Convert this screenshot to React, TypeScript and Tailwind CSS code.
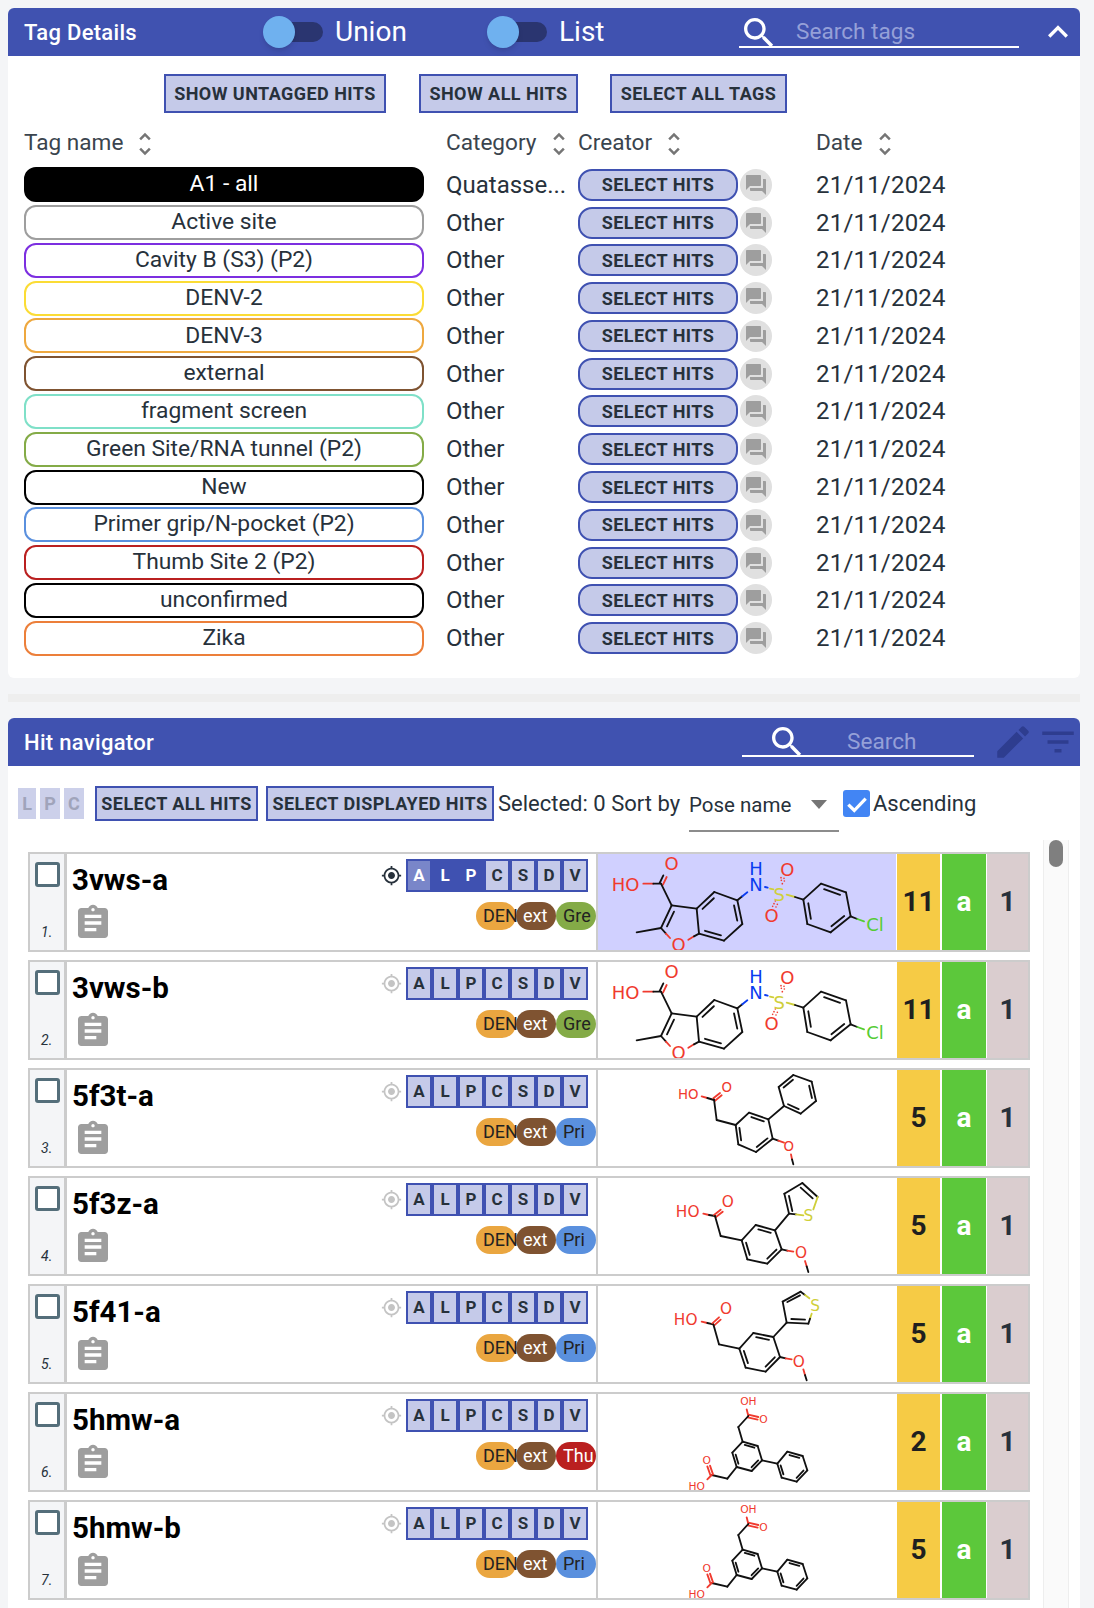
const searchPath = 'M15.5 14h-.79l-.28-.27C15.41 12.59 16 11.11 16 9.5 16 5.91 13.09 3 9.5 3S3 5.91 3 9.5 5.91 16 9.5 16c1.61 0 3.09-.59 4.23-1.57l.27.28v.79l5 4.99L20.49 19l-4.99-5zm-6 0C7.01 14 5 11.99 5 9.5S7.01 5 9.5 5 14 7.01 14 9.5 11.99 14 9.5 14z'
const forumPath = 'M21 6h-2v9H6v2c0 .55.45 1 1 1h11l4 4V7c0-.55-.45-1-1-1zm-4 6V3c0-.55-.45-1-1-1H3c-.55 0-1 .45-1 1v14l4-4h10c.55 0 1-.45 1-1z'
const sortPath = 'M12 5.83 15.17 9l1.41-1.41L12 3 7.41 7.59 8.83 9 12 5.83zm0 12.34L8.83 15l-1.41 1.41L12 21l4.59-4.59L15.17 15 12 18.17z'
const assignmentPath = 'M19 3h-4.18C14.4 1.84 13.3 1 12 1c-1.3 0-2.4.84-2.82 2H5c-1.1 0-2 .9-2 2v14c0 1.1.9 2 2 2h14c1.1 0 2-.9 2-2V5c0-1.1-.9-2-2-2zm-7 0c.55 0 1 .45 1 1s-.45 1-1 1-1-.45-1-1 .45-1 1-1zm2 14H7v-2h7v2zm3-4H7v-2h10v2zm0-4H7V7h10v2z'
const gpsPath = 'M12 8c-2.21 0-4 1.79-4 4s1.79 4 4 4 4-1.79 4-4-1.79-4-4-4zm8.94 3c-.46-4.17-3.77-7.48-7.94-7.94V1h-2v2.06C6.83 3.52 3.52 6.83 3.06 11H1v2h2.06c.46 4.17 3.77 7.48 7.94 7.94V23h2v-2.06c4.17-.46 7.48-3.77 7.94-7.94H23v-2h-2.06zM12 19c-3.87 0-7-3.13-7-7s3.13-7 7-7 7 3.13 7 7-3.13 7-7 7z'
const editPath = 'M3 17.25V21h3.75L17.81 9.94l-3.75-3.75L3 17.25zM20.71 7.04c.39-.39.39-1.02 0-1.41l-2.34-2.34c-.39-.39-1.02-.39-1.41 0l-1.83 1.83 3.75 3.75 1.83-1.83z'
const filterPath = 'M10 18h4v-2h-4v2zM3 6v2h18V6H3zm3 7h12v-2H6v2z'

const RED = '#f03a2e'
const BLUE = '#0a3cf0'
const YEL = '#cfcf3a'
const GRN = '#55cc33'

type Pt = [number, number]
type Bond = [number, number, number, number, string?]
type Label = [string, number, number, string]
type Ring = { pts: Pt[]; doubles: number[] }
type Mol = { box: string; size: number; rings: Ring[]; bonds: Bond[]; labels: Label[]; dots?: Pt[] }

const furanMol: Mol = {
  box: '21 33 894 288',
  size: 54,
  rings: [
    { pts: [[320, 197], [373, 147], [442, 172], [457, 243], [402, 293], [327, 272]], doubles: [0, 2, 4] },
    { pts: [[640, 170], [693, 122], [768, 148], [782, 220], [722, 268], [652, 243]], doubles: [1, 3, 5] },
  ],
  bonds: [
    [160, 122, 190, 122, RED], [190, 122, 213, 122],
    [209, 120, 220, 97], [219, 125, 230, 102, RED],
    [213, 122, 245, 187], [245, 187, 320, 197],
    [245, 187, 213, 255], [252, 206, 231, 250],
    [213, 255, 140, 268], [213, 255, 228, 272], [228, 272, 240, 285, RED],
    [295, 290, 312, 280, RED], [312, 280, 327, 272],
    [442, 172, 457, 160], [457, 160, 472, 148, BLUE],
    [525, 132, 533, 134, BLUE], [540, 137, 550, 139, YEL],
    [590, 155, 615, 162, YEL], [615, 162, 640, 170],
    [782, 220, 802, 228], [802, 228, 822, 235, GRN],
  ],
  dots: [[574, 112], [583, 114], [577, 122], [573, 104], [582, 106], [552, 182], [562, 184], [556, 174], [548, 190], [558, 192]],
  labels: [['HO', 107, 123, RED], ['O', 245, 62, RED], ['O', 266, 305, RED], ['N', 498, 125, BLUE], ['H', 498, 75, BLUE], ['S', 568, 155, YEL], ['O', 592, 78, RED], ['O', 545, 218, RED], ['Cl', 855, 245, GRN]],
}

const biphenylMol: Mol = {
  box: '21 357 894 288',
  size: 40,
  rings: [
    { pts: [[437, 522], [477, 485], [535, 505], [548, 563], [498, 603], [445, 580]], doubles: [1, 3, 5] },
    { pts: [[582, 465], [566, 408], [610, 372], [665, 392], [678, 450], [632, 488]], doubles: [1, 3, 5] },
  ],
  bonds: [
    [335, 436, 352, 441, RED], [352, 441, 372, 447],
    [370, 442, 390, 426, RED], [375, 449, 395, 433, RED],
    [372, 445, 380, 507], [380, 507, 437, 522], [535, 505, 582, 465],
    [548, 563, 565, 569], [565, 569, 582, 575, RED], [603, 610, 606, 625, RED], [606, 625, 610, 640],
  ],
  labels: [['HO', 295, 430, RED], ['O', 410, 410, RED], ['O', 596, 585, RED]],
}

const thiopheneMol: Mol = {
  box: '21 -9 894 288',
  size: 46,
  rings: [
    { pts: [[455, 178], [497, 132], [555, 148], [575, 205], [532, 248], [472, 235]], doubles: [1, 3, 5] },
  ],
  bonds: [
    [340, 98, 357, 102, RED], [357, 102, 375, 105],
    [372, 102, 392, 86, RED], [377, 109, 398, 92, RED],
    [375, 105, 392, 165], [392, 165, 455, 178], [555, 148, 597, 98],
    [597, 98, 583, 38], [607, 90, 597, 45], [583, 38, 637, 6], [637, 6, 683, 48], [632, 20, 668, 52],
    [683, 48, 670, 85, YEL], [597, 98, 618, 100], [618, 100, 640, 103, YEL],
    [575, 205, 592, 209], [592, 209, 610, 212, RED], [645, 240, 650, 256, RED], [650, 256, 655, 273],
  ],
  labels: [['HO', 293, 94, RED], ['O', 413, 62, RED], ['S', 655, 105, YEL], ['O', 633, 217, RED]],
}

const thiophene3Mol: Mol = {
  box: '21 315 894 288',
  size: 46,
  rings: [
    { pts: [[448, 503], [490, 456], [550, 468], [570, 528], [527, 572], [467, 560]], doubles: [1, 3, 5] },
  ],
  bonds: [
    [335, 422, 352, 426, RED], [352, 426, 370, 430],
    [367, 427, 387, 409, RED], [372, 434, 392, 416, RED],
    [370, 430, 387, 490], [387, 490, 448, 503], [550, 468, 590, 425],
    [590, 425, 578, 362], [578, 362, 632, 332], [592, 363, 630, 343], [632, 332, 645, 342], [645, 342, 658, 352, YEL],
    [665, 398, 660, 413, YEL], [660, 413, 655, 428], [655, 428, 590, 425], [645, 416, 604, 414],
    [570, 528, 587, 532], [587, 532, 605, 535, RED], [640, 565, 645, 582, RED], [645, 582, 650, 598],
  ],
  labels: [['HO', 287, 418, RED], ['O', 408, 385, RED], ['S', 675, 375, YEL], ['O', 626, 542, RED]],
}

const diacidMol: Mol = {
  box: '21 639 894 288',
  size: 32,
  rings: [
    { pts: [[458, 782], [503, 795], [516, 838], [485, 870], [440, 858], [427, 815]], doubles: [0, 2, 4] },
    { pts: [[562, 848], [592, 812], [638, 825], [652, 868], [620, 902], [575, 890]], doubles: [1, 3, 5] },
  ],
  bonds: [
    [470, 685, 475, 705, RED], [475, 701, 505, 708, RED], [473, 709, 503, 716, RED],
    [475, 705, 445, 738], [445, 738, 458, 782], [516, 838, 562, 848],
    [440, 858, 412, 893], [412, 893, 365, 882],
    [361, 882, 352, 856, RED], [369, 880, 360, 854, RED], [365, 882, 352, 895, RED],
  ],
  labels: [['OH', 475, 662, RED], ['O', 520, 716, RED], ['O', 350, 838, RED], ['HO', 320, 915, RED]],
}

function Molecule({ mol }: { mol: Mol }) {
  const lines: Bond[] = [...mol.bonds]
  mol.rings.forEach((ring) => {
    const cx = ring.pts.reduce((s, p) => s + p[0], 0) / ring.pts.length
    const cy = ring.pts.reduce((s, p) => s + p[1], 0) / ring.pts.length
    ring.pts.forEach((p, i) => {
      const q = ring.pts[(i + 1) % ring.pts.length]
      lines.push([p[0], p[1], q[0], q[1]])
      if (ring.doubles.includes(i)) {
        const inner = (v: number, c: number) => v + (c - v) * 0.2
        lines.push([
          inner(p[0] + (q[0] - p[0]) * 0.1, cx),
          inner(p[1] + (q[1] - p[1]) * 0.1, cy),
          inner(q[0] + (p[0] - q[0]) * 0.1, cx),
          inner(q[1] + (p[1] - q[1]) * 0.1, cy),
        ])
      }
    })
  })
  return (
    <svg viewBox={mol.box} className="block h-full w-full -translate-x-[1px]">
      {lines.map((b, i) => (
        <line key={i} x1={b[0]} y1={b[1]} x2={b[2]} y2={b[3]} stroke={b[4] ?? '#111'} strokeWidth={5.5} strokeLinecap="round" />
      ))}
      {mol.dots?.map((d, i) => (
        <circle key={i} cx={d[0]} cy={d[1]} r={2.5} fill={RED} />
      ))}
      {mol.labels.map((l, i) => (
        <text key={i} x={l[1]} y={l[2]} fill={l[3]} fontSize={mol.size} textAnchor="middle" dominantBaseline="central" className="font-['DejaVu_Sans',sans-serif]">
          {l[0]}
        </text>
      ))}
    </svg>
  )
}

function Icon({ d, className }: { d: string; className: string }) {
  return (
    <svg viewBox="0 0 24 24" className={className} fill="currentColor">
      <path d={d} />
    </svg>
  )
}

function Toggle({ label }: { label: string }) {
  return (
    <div className="flex items-center">
      <div className="relative h-[20px] w-[52px] rounded-full bg-[#2a3570]">
        <div className="absolute left-[-8px] top-[-6px] h-[32px] w-[32px] rounded-full bg-[#6fb1ef] shadow-md" />
      </div>
      <span className="ml-[12px] text-[28px] leading-none text-white">{label}</span>
    </div>
  )
}

function SquareButton({ children, className }: { children: string; className: string }) {
  return (
    <button className={`flex shrink-0 items-center justify-center border-2 border-[#3f51b1] bg-[#c5cae9] text-[18px] font-bold tracking-[0.45px] text-[#27313b] ${className}`}>
      {children}
    </button>
  )
}

function SortHead({ label, className }: { label: string; className: string }) {
  return (
    <div className={`flex items-center text-[22.6px] text-[#3a444e] ${className}`}>
      <span className="pb-[2px]">{label}</span>
      <Icon d={sortPath} className="ml-[7px] h-[30px] w-[30px] text-[#757575]" />
    </div>
  )
}

const tags = [
  { name: 'A1 - all', border: 'border-black', fill: 'bg-black text-white', category: 'Quatasse...' },
  { name: 'Active site', border: 'border-[#9e9e9e]', fill: 'bg-white text-[#27313b]', category: 'Other' },
  { name: 'Cavity B (S3) (P2)', border: 'border-[#7c2fe0]', fill: 'bg-white text-[#27313b]', category: 'Other' },
  { name: 'DENV-2', border: 'border-[#fbdc35]', fill: 'bg-white text-[#27313b]', category: 'Other' },
  { name: 'DENV-3', border: 'border-[#eea83f]', fill: 'bg-white text-[#27313b]', category: 'Other' },
  { name: 'external', border: 'border-[#7f5331]', fill: 'bg-white text-[#27313b]', category: 'Other' },
  { name: 'fragment screen', border: 'border-[#7fe0c8]', fill: 'bg-white text-[#27313b]', category: 'Other' },
  { name: 'Green Site/RNA tunnel (P2)', border: 'border-[#84ab47]', fill: 'bg-white text-[#27313b]', category: 'Other' },
  { name: 'New', border: 'border-black', fill: 'bg-white text-[#27313b]', category: 'Other' },
  { name: 'Primer grip/N-pocket (P2)', border: 'border-[#5a90de]', fill: 'bg-white text-[#27313b]', category: 'Other' },
  { name: 'Thumb Site 2 (P2)', border: 'border-[#ba2020]', fill: 'bg-white text-[#27313b]', category: 'Other' },
  { name: 'unconfirmed', border: 'border-black', fill: 'bg-white text-[#27313b]', category: 'Other' },
  { name: 'Zika', border: 'border-[#ec7f3a]', fill: 'bg-white text-[#27313b]', category: 'Other' },
]

const pillStyles: Record<string, string> = {
  DEN: 'bg-[#eaa640] text-[#222]',
  ext: 'bg-[#7f5331] text-white',
  Gre: 'bg-[#84ab47] text-[#222]',
  Pri: 'bg-[#5a90de] text-[#222]',
  Thu: 'bg-[#ba2020] text-white',
}

const hits: { name: string; mol: Mol; last: string; score: string }[] = [
  { name: '3vws-a', mol: furanMol, last: 'Gre', score: '11' },
  { name: '3vws-b', mol: furanMol, last: 'Gre', score: '11' },
  { name: '5f3t-a', mol: biphenylMol, last: 'Pri', score: '5' },
  { name: '5f3z-a', mol: thiopheneMol, last: 'Pri', score: '5' },
  { name: '5f41-a', mol: thiophene3Mol, last: 'Pri', score: '5' },
  { name: '5hmw-a', mol: diacidMol, last: 'Thu', score: '2' },
  { name: '5hmw-b', mol: diacidMol, last: 'Pri', score: '5' },
]

function HitRow({ hit, index }: { hit: (typeof hits)[number]; index: number }) {
  const selected = index === 0
  return (
    <div className="mb-[8px] flex h-[100px] w-[1002px] border-x-2 border-y-2 border-[#cccccc]">
      <div className="relative w-[34px] shrink-0 bg-[#f4f5f7]">
        <div className="ml-[5px] mt-[8px] h-[25px] w-[25px] rounded-[3px] border-[3px] border-[#546e7a] bg-white" />
        <span className="absolute bottom-[11px] left-[11px] text-[14px] italic leading-none text-[#27313b]">{index + 1}.</span>
      </div>
      <div className="w-[3px] shrink-0 bg-[#cccccc]" />
      <div className="relative flex w-[529px] shrink-0 bg-white">
        <div className="pl-[5px]">
          <div className="mt-[6px] text-[29.5px] font-bold leading-[40px] text-black">{hit.name}</div>
          <Icon d={assignmentPath} className="ml-[1px] mt-[3px] h-[40px] w-[40px] text-[#9e9e9e]" />
        </div>
        <div className="ml-auto flex flex-col items-end">
          <div className="mr-[8px] mt-[5px] flex items-center">
            <Icon d={gpsPath} className={`mr-[4px] h-[21px] w-[21px] ${selected ? 'text-[#27313b]' : 'text-[#c4c4c4]'}`} />
            <div className="flex">
              {['A', 'L', 'P', 'C', 'S', 'D', 'V'].map((letter, i) => (
                <div
                  key={letter}
                  className={`flex h-[33px] w-[26px] items-center justify-center border-2 border-[#3f51b1] text-[17px] font-bold ${
                    selected && i === 0
                      ? 'bg-[#7986c9] text-white'
                      : selected && i < 3
                        ? 'bg-[#3f51b1] text-white'
                        : 'bg-[#c5cae9] text-[#27313b]'
                  }`}
                >
                  {letter}
                </div>
              ))}
            </div>
          </div>
          <div className="mt-[10px] flex">
            {['DEN', 'ext', hit.last].map((pill) => (
              <div key={pill} className={`flex h-[28px] w-[40px] items-center justify-start whitespace-nowrap rounded-[14px] pl-[7px] text-[18px] leading-none ${pillStyles[pill]}`}>
                {pill}
              </div>
            ))}
          </div>
        </div>
      </div>
      <div className="w-[2px] shrink-0 bg-[#cccccc]" />
      <div className={`h-full w-[298px] shrink-0 ${selected ? 'bg-[#d0d0ff]' : 'bg-white'}`}>
        <Molecule mol={hit.mol} />
      </div>
      <div className="ml-[1px] flex w-[43px] shrink-0 items-center justify-center bg-[#f6cb45] text-[28px] font-bold text-[#1f1f1f]">{hit.score}</div>
      <div className="ml-[2px] flex w-[44px] shrink-0 items-center justify-center bg-[#5cc83b] text-[28px] font-bold text-white">a</div>
      <div className="ml-[1px] flex flex-1 items-center justify-center bg-[#dacdcf] text-[28px] font-bold text-[#27313b]">1</div>
    </div>
  )
}

export default function App() {
  return (
    <div className="h-[1608px] w-[1094px] overflow-hidden bg-[#f4f5f7] px-[8px] pt-[8px] font-['Roboto',sans-serif]">
      <section className="h-[670px] w-[1072px] rounded-[6px] bg-white">
        <header className="flex h-[48px] items-center rounded-t-[6px] bg-[#4052b0] pl-[16px]">
          <h2 className="w-[247px] text-[22px] font-medium tracking-[0.3px] text-white">Tag Details</h2>
          <div className="w-[224px]">
            <Toggle label="Union" />
          </div>
          <div className="w-[244px]">
            <Toggle label="List" />
          </div>
          <div className="relative h-[48px] w-[280px] shrink-0">
            <div className="absolute left-0 right-0 top-[38px] h-[2px] bg-white" />
            <Icon d={searchPath} className="absolute left-0 top-[5px] h-[40px] w-[40px] text-white" />
            <span className="absolute left-[57px] top-[9px] text-[22.6px] leading-[30px] text-[#95a0d8]">Search tags</span>
          </div>
          <Icon d="m12 8-6 6 1.41 1.41L12 10.83l4.59 4.58L18 14z" className="ml-[19px] h-[40px] w-[40px] text-white" />
        </header>

        <div className="ml-[156px] mt-[18px] flex h-[39px]">
          <SquareButton className="w-[222px]">SHOW UNTAGGED HITS</SquareButton>
          <SquareButton className="ml-[33px] w-[159px]">SHOW ALL HITS</SquareButton>
          <SquareButton className="ml-[32px] w-[177px]">SELECT ALL TAGS</SquareButton>
        </div>

        <div className="ml-[16px] mt-[11px] flex h-[40px] items-center">
          <SortHead label="Tag name" className="w-[422px]" />
          <SortHead label="Category" className="w-[132px]" />
          <SortHead label="Creator" className="w-[238px]" />
          <SortHead label="Date" className="w-[120px]" />
        </div>

        <div className="ml-[16px] mt-[2px]">
          {tags.map((tag) => (
            <div key={tag.name} className="flex h-[37.77px] items-center text-[24px] text-[#27313b]">
              <div className={`flex h-[35px] w-[400px] shrink-0 items-center justify-center rounded-[12px] border-2 text-[22.8px] leading-none ${tag.border} ${tag.fill}`}>
                {tag.name}
              </div>
              <div className="ml-[22px] w-[132px] shrink-0">{tag.category}</div>
              <button className="flex h-[32px] w-[160px] shrink-0 items-center justify-center rounded-[14px] border-2 border-[#3f51b1] bg-[#c5cae9] text-[18px] font-bold tracking-[0.45px] text-[#27313b]">
                SELECT HITS
              </button>
              <div className="ml-[2px] flex h-[32px] w-[32px] shrink-0 items-center justify-center rounded-full bg-[#e0e0e0]">
                <Icon d={forumPath} className="h-[24px] w-[24px] text-[#9e9e9e]" />
              </div>
              <div className="ml-[44px] tracking-[0.2px]">21/11/2024</div>
            </div>
          ))}
        </div>
      </section>

      <div className="mt-[16px] h-[8px] w-[1072px] bg-[#eeeeee]" />

      <section className="mt-[16px] h-[900px] w-[1072px] rounded-t-[6px] bg-white">
        <header className="flex h-[48px] items-center rounded-t-[6px] bg-[#4052b0] pl-[16px]">
          <h2 className="w-[718px] text-[22px] font-medium tracking-[0.3px] text-white">Hit navigator</h2>
          <div className="relative h-[48px] w-[232px] shrink-0">
            <div className="absolute left-0 right-0 top-[37px] h-[2px] bg-white" />
            <Icon d={searchPath} className="absolute left-[25px] top-[4px] h-[40px] w-[40px] text-white" />
            <span className="absolute left-[105px] top-[9px] text-[22.6px] leading-[30px] text-[#95a0d8]">Search</span>
          </div>
          <Icon d={editPath} className="ml-[18px] h-[42px] w-[42px] shrink-0 text-[#2e3d8f]" />
          <Icon d={filterPath} className="ml-[3px] h-[42px] w-[42px] shrink-0 text-[#2e3d8f]" />
        </header>

        <div className="mt-[20px] flex h-[35px] items-center pl-[10px] text-[22px] text-[#27313b]">
          {['L', 'P', 'C'].map((letter, i) => (
            <div key={letter} className={`flex h-[31px] items-center justify-center bg-[#ccd0ea] text-[18px] font-bold text-[#a0a4ba] ${i === 0 ? 'w-[18px]' : 'ml-[4px] w-[20px]'}`}>
              {letter}
            </div>
          ))}
          <SquareButton className="ml-[11px] h-[35px] w-[163px]">SELECT ALL HITS</SquareButton>
          <SquareButton className="ml-[8px] h-[35px] w-[228px]">SELECT DISPLAYED HITS</SquareButton>
          <span className="ml-[4px] w-[191px] shrink-0 whitespace-nowrap">Selected: 0 Sort by</span>
          <div className="relative mt-[2px] flex h-[54px] w-[150px] shrink-0 items-center pt-[2px] text-[20.5px]">
            <span>Pose name</span>
            <div className="absolute right-[12px] top-[22px] h-0 w-0 border-x-[8px] border-t-[9px] border-x-transparent border-t-[#757575]" />
            <div className="absolute bottom-0 left-0 right-0 h-[2px] bg-[#8c8c8c]" />
          </div>
          <div className="ml-[4px] flex h-[27px] w-[27px] shrink-0 items-center justify-center rounded-[3px] bg-[#4285f4]">
            <svg viewBox="0 0 24 24" className="h-[26px] w-[26px]" fill="none" stroke="white" strokeWidth={3}>
              <path d="M4 12.5l5.5 5.5L20 7" />
            </svg>
          </div>
          <span className="ml-[3px]">Ascending</span>
        </div>

        <div className="mt-[31px] flex">
          <div className="ml-[20px] w-[1010px] shrink-0">
            {hits.map((hit, i) => (
              <HitRow key={hit.name} hit={hit} index={i} />
            ))}
          </div>
          <div className="ml-[5px] mt-[-12px] h-[900px] w-[26px] border-x border-[#eeeeee] bg-[#fafafa] px-[5px]">
            <div className="h-[27px] w-[14px] rounded-full bg-[#7f7f7f]" />
          </div>
        </div>
      </section>
    </div>
  )
}
